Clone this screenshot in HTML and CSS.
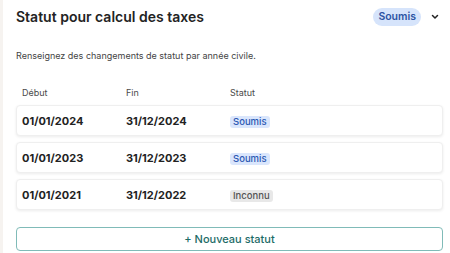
FILE: index.html
```html
<!DOCTYPE html>
<html lang="fr">
<head>
<meta charset="utf-8">
<link rel="stylesheet" href="styles.css">
</head>
<body>
<div class="page">
  <div class="panel">
    <div class="header">
      <h1 class="title">Statut pour calcul des taxes</h1>
      <div class="header-right">
        <span class="pill">Soumis</span>
        <svg class="chevron" width="10" height="10" viewBox="0 0 10 10"><path d="M2.5 3.5 L5 6 L7.5 3.5" fill="none" stroke="#222" stroke-width="1.5" stroke-linecap="round" stroke-linejoin="round"/></svg>
      </div>
    </div>
    <p class="desc">Renseignez des changements de statut par année civile.</p>
    <div class="cols">
      <span class="c1">Début</span><span class="c2">Fin</span><span class="c3">Statut</span>
    </div>
    <div class="rows">
      <div class="row"><span class="c1">01/01/2024</span><span class="c2">31/12/2024</span><span class="c3"><span class="tag tag-blue">Soumis</span></span></div>
      <div class="row"><span class="c1">01/01/2023</span><span class="c2">31/12/2023</span><span class="c3"><span class="tag tag-blue">Soumis</span></span></div>
      <div class="row"><span class="c1">01/01/2021</span><span class="c2">31/12/2022</span><span class="c3"><span class="tag tag-gray">Inconnu</span></span></div>
    </div>
    <button class="add">+ Nouveau statut</button>
  </div>
</div>
</body>
</html>
```
FILE: styles.css
```css
html, body { margin: 0; padding: 0; }
body {
  width: 450px;
  height: 253px;
  overflow: hidden;
  background: #f6f3f0;
  font-family: Inter, "Noto Sans", sans-serif;
  color: #1f1f1f;
}
.page { padding-left: 3px; height: 100%; }
.panel {
  background: #fff;
  height: 100%;
  padding: 0 7px 0 13px;
  box-sizing: border-box;
}
.header {
  display: flex;
  align-items: center;
  justify-content: space-between;
  height: 33px;
}
.title {
  margin: 0;
  font-size: 14px;
  font-weight: 600;
  color: #232323;
}
.header-right { display: flex; align-items: center; gap: 9px; margin-right: 3px; }
.pill {
  background: #d6e4fb;
  color: #2c54a3;
  font-size: 10.5px;
  font-weight: 600;
  padding: 0 5px;
  border-radius: 9px;
  line-height: 18px;
  height: 18px;
}
.chevron { display: block; }
.desc {
  margin: 16px 0 0 0;
  font-size: 9px;
  color: #444;
  line-height: 14px;
}
.cols {
  display: flex;
  margin-top: 23px;
  padding: 0 6px;
  font-size: 9px;
  color: #4a4a4a;
  line-height: 14px;
}
.c1 { width: 104px; }
.c2 { width: 104px; }
.c3 { flex: 1; }
.rows {
  display: flex;
  flex-direction: column;
  gap: 6px;
  margin-top: 5px;
}
.row {
  display: flex;
  align-items: center;
  height: 31px;
  padding: 0 5px;
  border-radius: 4px;
  background: #fff;
  border: 1px solid #efefef;
  box-shadow: 0 1px 3px rgba(0,0,0,0.08);
  font-size: 11px;
  font-weight: 700;
  color: #222;
  box-sizing: border-box;
}
.tag {
  display: inline-block;
  font-size: 9.5px;
  font-weight: 500;
  line-height: 12px;
  padding: 0 3px;
  border-radius: 3px;
}
.tag-blue { background: #dae6fc; color: #2d5ab3; }
.tag-gray { background: #e8e8e8; color: #555; }
.add {
  display: block;
  width: 100%;
  margin-top: 17px;
  height: 24px;
  border: 1.5px solid #80bbb8;
  border-radius: 4px;
  background: #fff;
  color: #1d6b67;
  font-family: Inter, "Noto Sans", sans-serif;
  font-size: 11px;
  font-weight: 500;
  box-sizing: border-box;
}
```
